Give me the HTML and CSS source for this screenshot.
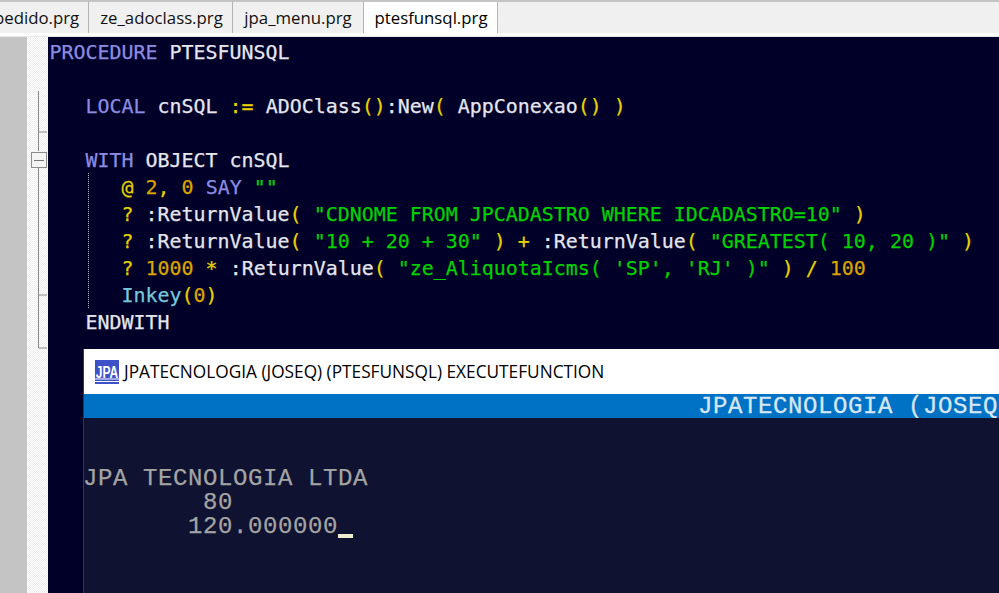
FILE: index.html
```html
<!DOCTYPE html>
<html lang="pt">
<head>
<meta charset="utf-8">
<title>ptesfunsql.prg</title>
<link rel="stylesheet" href="styles.css">
</head>
<body>
<div class="ide">
  <nav class="tabs">
    <div class="tab tab-clipped">pedido.prg</div>
    <div class="tab tab-w2">ze_adoclass.prg</div>
    <div class="tab tab-w3">jpa_menu.prg</div>
    <div class="tab tab-active">ptesfunsql.prg</div>
  </nav>
  <div class="strip"></div>
  <main class="workspace">
    <div class="side"></div>
    <div class="fold">
      <svg class="fold-svg" width="21" height="556" viewBox="0 0 21 556" aria-hidden="true">
        <path class="fold-line" d="M11.5 54V114M11.5 131V311H20M11.5 95H20M11.5 258H20"/>
        <rect class="fold-box" x="4.5" y="115.5" width="15" height="15"/>
        <path class="fold-minus" d="M7 123.5H17"/>
      </svg>
    </div>
    <div class="code-area">
      <div class="guide"></div>
<pre class="code"><span class="kw">PROCEDURE</span> <span class="id">PTESFUNSQL</span>

   <span class="kw">LOCAL</span> <span class="id">cnSQL</span> <span class="op">:=</span> <span class="id">ADOClass</span><span class="op">()</span><span class="id">:New</span><span class="op">(</span> <span class="id">AppConexao</span><span class="op">() )</span>

   <span class="kw">WITH</span> <span class="id">OBJECT cnSQL</span>
      <span class="op">@</span> <span class="num">2</span><span class="op">,</span> <span class="num">0</span> <span class="kw">SAY</span> <span class="str">""</span>
      <span class="op">?</span> <span class="id">:ReturnValue</span><span class="op">(</span> <span class="str">"CDNOME FROM JPCADASTRO WHERE IDCADASTRO=10"</span> <span class="op">)</span>
      <span class="op">?</span> <span class="id">:ReturnValue</span><span class="op">(</span> <span class="str">"10 + 20 + 30"</span> <span class="op">) +</span> <span class="id">:ReturnValue</span><span class="op">(</span> <span class="str">"GREATEST( 10, 20 )"</span> <span class="op">)</span>
      <span class="op">?</span> <span class="num">1000</span> <span class="op">*</span> <span class="id">:ReturnValue</span><span class="op">(</span> <span class="str">"ze_AliquotaIcms( 'SP', 'RJ' )"</span> <span class="op">) /</span> <span class="num">100</span>
      <span class="fn">Inkey</span><span class="op">(</span><span class="num">0</span><span class="op">)</span>
   <span class="id">ENDWITH</span></pre>
    </div>
  </main>
</div>
<section class="console">
  <header class="console-title">
    <svg class="logo" width="24" height="24" viewBox="0 0 24 24" aria-hidden="true">
      <rect width="24" height="24" fill="#3f51c8"/>
      <text class="logo-text" text-anchor="middle" transform="translate(12 17.5) scale(1 1.4)">JPA</text>
      <path d="M0 19H24M0 21.5H24" stroke="#fff" stroke-width="1.2"/>
    </svg>
    <span class="console-name">JPATECNOLOGIA (JOSEQ) (PTESFUNSQL) EXECUTEFUNCTION</span>
  </header>
  <div class="console-bar">JPATECNOLOGIA (JOSEQ</div>
  <pre class="console-body">


JPA TECNOLOGIA LTDA
        80
       120.000000<span class="cursor"></span></pre>
</section>
</body>
</html>
```
FILE: styles.css
```css
* { box-sizing: border-box; }
html, body { margin: 0; padding: 0; height: 100%; overflow: hidden; }
body { position: relative; width: 999px; height: 593px; background: #000028; }
.ide { display: flex; flex-direction: column; height: 593px; }

.tabs {
  display: flex;
  height: 33px;
  flex: none;
  background: #f0f0f0;
  border-top: 2px solid #c4c4c4;
  font: 16.8px/31px "Open Sans", sans-serif;
  color: #111;
  overflow: hidden;
}
.tab {
  flex: none;
  border-right: 1px solid #b4b4b4;
  text-align: center;
  white-space: nowrap;
}
.tab-clipped { width: 89px; text-indent: -6px; text-align: left; overflow: hidden; }
.tab-w2 { width: 144px; padding-left: 2px; }
.tab-w3 { width: 131px; }
.tab-active { width: 134px; padding-left: 1px; background: #fff; color: #000; }
.strip { height: 4px; flex: none; background: #fdfdfd; border-bottom: 1px solid #e8e8e8; }

.workspace { display: flex; flex: 1; min-height: 0; }
.side { width: 27px; flex: none; background: #c4c4c4; }
.fold {
  width: 21px;
  flex: none;
  background-color: #fff;
  background-image: conic-gradient(#eee 25%, #fff 0 50%, #eee 0 75%, #fff 0);
  background-size: 2px 2px;
}
.fold-svg { display: block; }
.fold-line { fill: none; stroke: #8a8a8a; stroke-width: 1; }
.fold-box { fill: #f4f4f4; stroke: #8a8a8a; stroke-width: 1; }
.fold-minus { stroke: #777; stroke-width: 1; }

.code-area { position: relative; flex: 1; background: #000028; min-width: 0; }
.code {
  margin: 0;
  padding: 2px 0 0 1.5px;
  font: 19.95px/27px "DejaVu Sans Mono", monospace;
  -webkit-text-stroke: 0.25px currentColor;
  color: #e4e4ec;
}
.guide {
  position: absolute;
  left: 40px;
  top: 136px;
  height: 135px;
  border-left: 1px dotted #b8b8b8;
}
.kw { color: #8c8ce0; }
.id { color: #e6e6ee; }
.op { color: #e6d200; }
.num { color: #dca400; }
.str { color: #00d200; }
.fn { color: #78c8dc; }

.console {
  position: absolute;
  left: 83px;
  top: 349px;
  right: 0;
  bottom: 0;
  display: flex;
  flex-direction: column;
  background: #0f1230;
  border-left: 1px solid #33364e;
  overflow: hidden;
}
.console-title {
  display: flex;
  align-items: center;
  gap: 5px;
  height: 45px;
  flex: none;
  padding-left: 11px;
  background: #fff;
  margin-left: -1px;
}
.logo { flex: none; margin-left: 1px; }
.logo-text { font: 700 12px "Liberation Sans", sans-serif; fill: #fff; }
.console-name {
  font: 17.25px/24px "Open Sans", sans-serif;
  color: #000;
  white-space: nowrap;
}
.console-bar {
  height: 24px;
  flex: none;
  padding: 1px 0 0 614px;
  background: #0072c6;
  color: #d8e6f2;
  font: 24px/24px "Liberation Mono", monospace;
  letter-spacing: 0.6px;
  -webkit-text-stroke: 0.3px currentColor;
  white-space: nowrap;
  overflow: hidden;
}
.console-body {
  margin: 1px 0 0 -1px;
  color: #a4a4a4;
  font: 24px/24px "Liberation Mono", monospace;
  letter-spacing: 0.6px;
  -webkit-text-stroke: 0.25px currentColor;
}
.cursor {
  display: inline-block;
  width: 15px;
  height: 4px;
  background: #f0ecd0;
  vertical-align: -5px;
}
```
